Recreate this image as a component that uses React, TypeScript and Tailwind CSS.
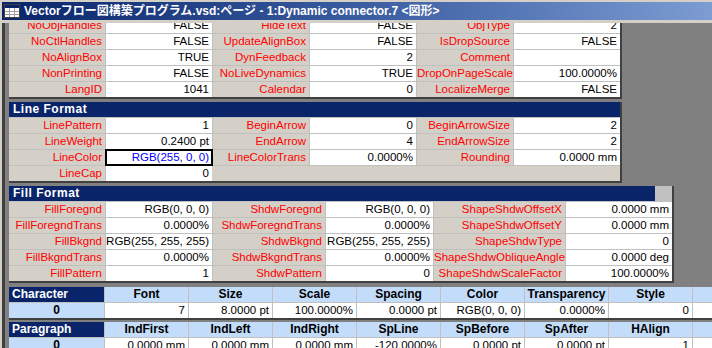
const sheetTop = [
  ["NoCtlHandles", "FALSE", "UpdateAlignBox", "FALSE", "IsDropSource", "FALSE"],
  ["NoAlignBox", "TRUE", "DynFeedback", "2", "Comment", ""],
  ["NonPrinting", "FALSE", "NoLiveDynamics", "TRUE", "DropOnPageScale", "100.0000%"],
  ["LangID", "1041", "Calendar", "0", "LocalizeMerge", "FALSE"],
];

const lineRows = [
  ["LinePattern", "1", "BeginArrow", "0", "BeginArrowSize", "2"],
  ["LineWeight", "0.2400 pt", "EndArrow", "4", "EndArrowSize", "2"],
  ["LineColor", "RGB(255, 0, 0)", "LineColorTrans", "0.0000%", "Rounding", "0.0000 mm"],
];

const fillRows = [
  ["FillForegnd", "RGB(0, 0, 0)", "ShdwForegnd", "RGB(0, 0, 0)", "ShapeShdwOffsetX", "0.0000 mm"],
  ["FillForegndTrans", "0.0000%", "ShdwForegndTrans", "0.0000%", "ShapeShdwOffsetY", "0.0000 mm"],
  ["FillBkgnd", "RGB(255, 255, 255)", "ShdwBkgnd", "RGB(255, 255, 255)", "ShapeShdwType", "0"],
  ["FillBkgndTrans", "0.0000%", "ShdwBkgndTrans", "0.0000%", "ShapeShdwObliqueAngle", "0.0000 deg"],
  ["FillPattern", "1", "ShdwPattern", "0", "ShapeShdwScaleFactor", "100.0000%"],
];

const charCols = ["Font", "Size", "Scale", "Spacing", "Color", "Transparency", "Style", ""];
const charVals = ["7", "8.0000 pt", "100.0000%", "0.0000 pt", "RGB(0, 0, 0)", "0.0000%", "0", ""];
const paraCols = ["IndFirst", "IndLeft", "IndRight", "SpLine", "SpBefore", "SpAfter", "HAlign", ""];
const paraVals = ["0.0000 mm", "0.0000 mm", "0.0000 mm", "-120.0000%", "0.0000 pt", "0.0000 pt", "1", ""];

const Label = ({ text }: { text: string }) => (
  <div className="h-[15px] bg-[#d4d0c8] pr-[3px] text-right text-[#ff0000] whitespace-nowrap overflow-hidden">{text}</div>
);

const Value = ({ text, selected = false }: { text: string; selected?: boolean }) => (
  <div
    className={
      selected
        ? "h-[15px] bg-white pr-[3px] text-right text-[#0000ff] whitespace-nowrap outline-2 outline-black -outline-offset-1"
        : "h-[15px] bg-white pr-[3px] text-right text-black whitespace-nowrap overflow-hidden"
    }
  >
    {text}
  </div>
);

const Row = ({ row }: { row: string[] }) => (
  <>
    {row.map((t, i) =>
      i % 2 === 0 ? <Label key={i} text={t} /> : <Value key={i} text={t} selected={t === "RGB(255, 0, 0)"} />
    )}
  </>
);

const SectionHeader = ({ title }: { title: string }) => (
  <div className="h-[15px] bg-[#0a246a] pl-[4px] text-[12px] font-bold text-white tracking-[0.5px]">{title}</div>
);

const TitleIcon = () => (
  <svg width="16" height="14" viewBox="0 0 16 14" className="shrink-0">
    <rect x="0.5" y="0.5" width="15" height="13" fill="#ffffff" stroke="#404040" />
    <rect x="1" y="1" width="14" height="3" fill="#0a246a" />
    <path d="M1 7.5H15M1 10.5H15M5.5 4V13M10.5 4V13" stroke="#a0a0a0" />
  </svg>
);

const TableSection = ({
  title,
  cols,
  vals,
}: {
  title: string;
  cols: string[];
  vals: string[];
}) => (
  <div className="w-fit border-b-2 border-[#404040] bg-[#c0c0c0]">
    <div className="grid grid-cols-[95px_repeat(8,83px)] gap-px">
      <div className="h-[15px] bg-[#0a246a] pl-[3px] text-[12px] font-bold text-white">{title}</div>
      {cols.map((c, i) => (
        <div key={i} className="h-[15px] bg-[#c2dcfa] text-center text-[12px] font-bold text-black">
          {c}
        </div>
      ))}
      <div className="h-[15px] bg-[#c2dcfa] text-center text-[12px] font-bold text-black">0</div>
      {vals.map((v, i) => (
        <div key={i} className="h-[15px] bg-white pr-[3px] text-right text-black whitespace-nowrap">
          {v}
        </div>
      ))}
    </div>
  </div>
);

export default function App() {
  return (
    <div className="w-[712px] h-[348px] overflow-hidden bg-[#d4d0c8] pt-[2px] pl-[2px] font-['Liberation_Sans','Noto_Sans_CJK_JP',sans-serif] text-[11.5px] leading-[15px]">
      {/* title bar */}
      <div className="h-[18px] flex items-center gap-[4px] pl-[2px] bg-gradient-to-r from-[#0a246a] via-[#3a5ca0] to-[#7c9cd2]">
        <TitleIcon />
        <span className="font-bold text-[12px] text-white whitespace-nowrap">
          Vectorフロー図構築プログラム.vsd:ページ - 1:Dynamic connector.7 &lt;図形&gt;
        </span>
      </div>

      {/* sheet area */}
      <div className="mt-[3px] h-[400px] border-l-[3px] border-[#404040] bg-[#808080] pl-[4px]">
        {/* Miscellaneous (scrolled) */}
        <div className="w-fit border-r-2 border-b-2 border-[#404040] bg-[#c0c0c0]">
          <div className="grid grid-cols-[96px_106px_96px_106px_96px_106px] gap-px">
            {["NoObjHandles", "FALSE", "HideText", "FALSE", "ObjType", "2"].map((t, i) => (
              <div
                key={i}
                className={
                  i % 2 === 0
                    ? "h-[10px] overflow-hidden bg-[#d4d0c8] pr-[3px] text-right text-[#ff0000]"
                    : "h-[10px] overflow-hidden bg-white pr-[3px] text-right text-black"
                }
              >
                <div className="-mt-[5px]">{t}</div>
              </div>
            ))}
            {sheetTop.map((r, i) => (
              <Row key={i} row={r} />
            ))}
          </div>
        </div>

        {/* Line Format */}
        <div className="mt-[3px] w-fit border-r-2 border-b-2 border-[#404040] bg-[#c0c0c0] flex flex-col gap-px">
          <SectionHeader title="Line Format" />
          <div className="grid grid-cols-[96px_106px_96px_106px_96px_106px] gap-px">
            {lineRows.map((r, i) => (
              <Row key={i} row={r} />
            ))}
            <Label text="LineCap" />
            <Value text="0" />
            <div className="col-span-4 -ml-px h-[15px] bg-[#d4d0c8]" />
          </div>
        </div>

        {/* Fill Format */}
        <div className="mt-[3px] w-fit border-r-2 border-b-2 border-[#404040] bg-[#c0c0c0] flex flex-col gap-px">
          <div className="flex h-[15px]">
            <div className="flex-1 bg-[#0a246a] pl-[4px] text-[12px] font-bold text-white tracking-[0.5px]">Fill Format</div>
            <div className="w-[17px] bg-[#c0c0c0]" />
          </div>
          <div className="grid grid-cols-[96px_106px_112px_107px_131px_106px] gap-px">
            {fillRows.map((r, i) => (
              <Row key={i} row={r} />
            ))}
          </div>
        </div>

        {/* Character */}
        <div className="mt-[4px]">
          <TableSection title="Character" cols={charCols} vals={charVals} />
        </div>

        {/* Paragraph */}
        <div className="mt-[2px]">
          <TableSection title="Paragraph" cols={paraCols} vals={paraVals} />
        </div>
      </div>
    </div>
  );
}
